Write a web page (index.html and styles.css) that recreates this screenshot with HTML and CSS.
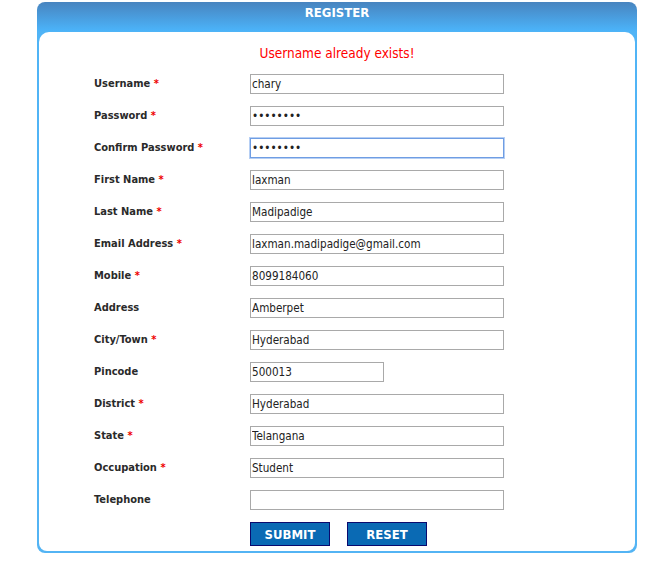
FILE: index.html
```html
<!DOCTYPE html>
<html>
<head>
<meta charset="utf-8">
<link rel="stylesheet" href="styles.css">
</head>
<body>
<div class="panel">
  <div class="panel-title">REGISTER</div>
  <div class="panel-body">
    <div class="message">Username already exists!</div>
    <form class="form">
      <div class="grid">
        <label class="lbl">Username <span class="req">*</span></label>
        <input class="field" type="text" value="chary">
        <label class="lbl">Password <span class="req">*</span></label>
        <input class="field" type="password" value="abcdefgh">
        <label class="lbl">Confirm Password <span class="req">*</span></label>
        <input class="field focused" type="password" value="abcdefgh">
        <label class="lbl">First Name <span class="req">*</span></label>
        <input class="field" type="text" value="laxman">
        <label class="lbl">Last Name <span class="req">*</span></label>
        <input class="field" type="text" value="Madipadige">
        <label class="lbl">Email Address <span class="req">*</span></label>
        <input class="field" type="text" value="laxman.madipadige@gmail.com">
        <label class="lbl">Mobile <span class="req">*</span></label>
        <input class="field" type="text" value="8099184060">
        <label class="lbl">Address</label>
        <input class="field" type="text" value="Amberpet">
        <label class="lbl">City/Town <span class="req">*</span></label>
        <input class="field" type="text" value="Hyderabad">
        <label class="lbl">Pincode</label>
        <input class="field short" type="text" value="500013">
        <label class="lbl">District <span class="req">*</span></label>
        <input class="field" type="text" value="Hyderabad">
        <label class="lbl">State <span class="req">*</span></label>
        <input class="field" type="text" value="Telangana">
        <label class="lbl">Occupation <span class="req">*</span></label>
        <input class="field" type="text" value="Student">
        <label class="lbl">Telephone</label>
        <input class="field" type="text" value="">
      </div>
      <div class="actions">
        <button type="button" class="btn">SUBMIT</button>
        <button type="button" class="btn">RESET</button>
      </div>
    </form>
  </div>
</div>
</body>
</html>
```
FILE: styles.css
```css
html, body {
  margin: 0;
  padding: 0;
  background: #ffffff;
}
body {
  font-family: "DejaVu Sans Condensed", "DejaVu Sans", sans-serif;
}
.panel {
  margin: 2px 0 0 37px;
  width: 600px;
  box-sizing: border-box;
  padding: 0 2px 2px 2px;
  border-radius: 8px;
  background: linear-gradient(to bottom, #4884bf 0px, #4bb2f8 28px, #50b4f6 30px, #53b4f4 100%);
}
.panel-title {
  height: 30px;
  box-sizing: border-box;
  padding-top: 2px;
  text-align: center;
  color: #ffffff;
  font-weight: bold;
  font-size: 13px;
  line-height: 18px;
}
.panel-body {
  background: #ffffff;
  border-radius: 10px 10px 8px 8px;
  padding: 12px 0 5px 55px;
}
.message {
  height: 18px;
  line-height: 18px;
  margin: 0 0 12px -55px;
  text-align: center;
  color: #ff0000;
  font-size: 13.5px;
}
.form {
  margin: 0;
}
.grid {
  display: grid;
  grid-template-columns: 156px 254px;
  grid-auto-rows: 20px;
  row-gap: 12px;
}
.lbl {
  font-size: 11px;
  font-weight: bold;
  color: #2a2a2a;
  line-height: 20px;
}
.req {
  color: #ee0000;
}
.field {
  box-sizing: border-box;
  width: 254px;
  height: 20px;
  margin: 0;
  padding: 0 1px;
  border: 1px solid #a9a9a9;
  font-family: "DejaVu Sans Condensed", "DejaVu Sans", sans-serif;
  font-size: 11.6px;
  color: #222222;
  background: #ffffff;
  outline: none;
}
.field.short {
  width: 134px;
}
.field.focused {
  border-color: #6f9de3;
  box-shadow: 0 0 0 1px #b6cff4;
}
.actions {
  display: flex;
  gap: 17px;
  height: 24px;
  margin-top: 12px;
  padding-left: 156px;
}
.btn {
  width: 80px;
  height: 24px;
  margin: 0;
  padding: 0;
  background: #0a6ab4;
  border: 1px solid #0a0a6e;
  color: #ffffff;
  font-family: "DejaVu Sans Condensed", "DejaVu Sans", sans-serif;
  font-weight: bold;
  font-size: 13px;
}
```
